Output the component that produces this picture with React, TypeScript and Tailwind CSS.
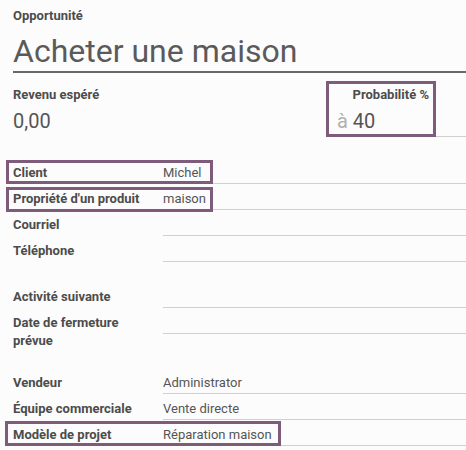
const labelClass = "w-[150px] shrink-0 pr-[12px] pt-[6px] text-[13px] font-bold leading-[18px] text-[#4c4c4c]";
const valueClass = "flex-1 h-[26px] border-b border-[#d0d0d0] pt-[5px] text-[13px] leading-[20px] text-[#555]";

function Highlight({ className }: { className: string }) {
  return <div className={"pointer-events-none absolute border-[3px] border-[#7e5a7b] " + className} />;
}

function Row({ label, value, box }: { label: string; value?: string; box?: string }) {
  return (
    <div className="relative flex h-[26px]">
      <div className={labelClass}>{label}</div>
      <div className={valueClass}>{value}</div>
      {box && <Highlight className={box} />}
    </div>
  );
}

export default function App() {
  return (
    <div className="h-[450px] w-[466px] overflow-hidden bg-[#fcfcfc] pl-[13px] pt-[6px] font-['Roboto',sans-serif]">
      <div className="text-[13px] font-bold leading-[20px] text-[#4c4c4c]">Opportunité</div>
      <h1 className="mt-[5px] border-b-2 border-[#686868] text-[32px] leading-[40px] text-[#5a5a5a]">
        Acheter une maison
      </h1>

      {/* revenu / probabilité */}
      <div className="relative mt-[13px] flex">
        <div className="flex-1">
          <div className="text-[13px] font-bold leading-[18px] text-[#4c4c4c]">Revenu espéré</div>
          <div className="mt-[5px] text-[20px] leading-[24px] text-[#555]">0,00</div>
        </div>
        <div className="w-[129px]">
          <div className="pr-[37px] text-right text-[13px] font-bold leading-[18px] text-[#4c4c4c]">
            Probabilité %
          </div>
          <div className="mt-[5px] border-b border-[#d0d0d0] pb-[3px] text-[20px] leading-[24px] text-[#555]">
            <span className="text-[#b0b0b0]">à</span> 40
          </div>
        </div>
        <Highlight className="left-[313px] -top-[5px] h-[56px] w-[110px]" />
      </div>

      <div className="mt-[21px]">
        <Row label="Client" value="Michel" box="-left-[7px] top-[2px] h-[24px] w-[207px]" />
        <Row label="Propriété d'un produit" value="maison" box="-left-[7px] top-[3px] h-[25px] w-[207px]" />
        <Row label="Courriel" />
        <Row label="Téléphone" />
      </div>

      <div className="mt-[20px]">
        <Row label="Activité suivante" />
        <Row label="Date de fermeture prévue" />
      </div>

      <div className="mt-[34px]">
        <Row label="Vendeur" value="Administrator" />
        <Row label="Équipe commerciale" value="Vente directe" />
        <Row label="Modèle de projet" value="Réparation maison" box="-left-[8px] top-[1px] h-[25px] w-[276px]" />
      </div>
    </div>
  );
}
